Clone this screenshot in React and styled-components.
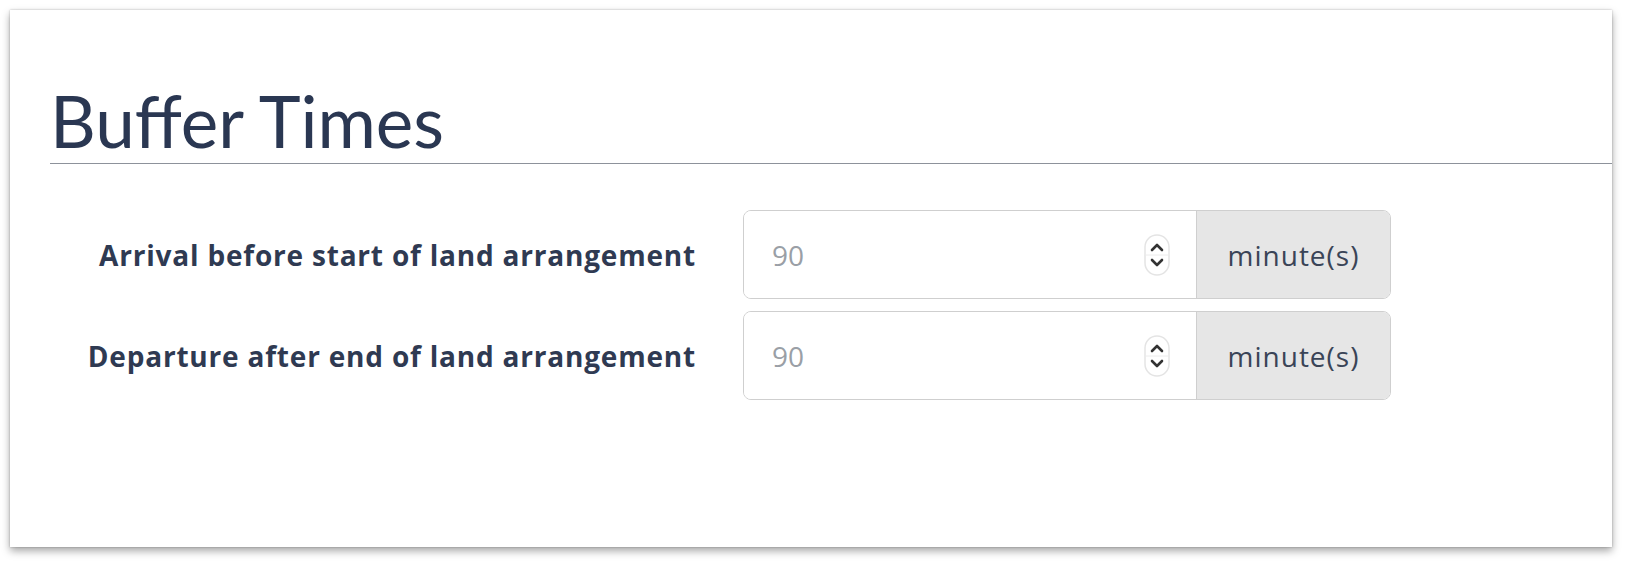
import React from 'react';
import styled, { createGlobalStyle } from 'styled-components';

const GlobalStyle = createGlobalStyle`
  html, body {
    margin: 0;
    padding: 0;
    background: #ffffff;
  }
  body {
    font-family: "Open Sans", Lato, sans-serif;
  }
`;

const Page = styled.div`
  width: 1634px;
  height: 562px;
  padding: 10px 22px 15px 10px;
  box-sizing: border-box;
`;

const Card = styled.section`
  height: 100%;
  background: #ffffff;
  box-shadow: 0 4px 8px rgba(0, 0, 0, 0.35), 0 0 2px rgba(0, 0, 0, 0.25);
  padding: 71px 0 0 40px;
  box-sizing: border-box;
`;

const Title = styled.h2`
  margin: 0;
  font-family: Lato, sans-serif;
  font-size: 71px;
  font-weight: 400;
  line-height: 80px;
  color: #2a3752;
  border-bottom: 1.5px solid #8d929b;
  padding-bottom: 2px;
`;

const Form = styled.div`
  display: grid;
  grid-template-columns: 646px 648px;
  column-gap: 47px;
  row-gap: 12px;
  margin-top: 46px;
  align-items: center;
`;

const Label = styled.label`
  text-align: right;
  font-size: 28px;
  font-weight: 700;
  letter-spacing: 0.8px;
  color: #2f3a52;
`;

const Group = styled.div`
  display: flex;
  height: 89px;
  border: 1.5px solid #cfcfcf;
  border-radius: 8px;
  box-sizing: border-box;
  overflow: hidden;
`;

const Field = styled.div`
  flex: 1;
  display: flex;
  align-items: center;
  padding: 0 26px 0 26px;
  background: #ffffff;
`;

const Input = styled.input`
  flex: 1;
  min-width: 0;
  border: none;
  outline: none;
  background: transparent;
  font-family: "Open Sans", sans-serif;
  font-size: 28px;
  color: #9a9fa6;
`;

const Addon = styled.span`
  width: 193px;
  display: flex;
  align-items: center;
  justify-content: center;
  background: #e6e6e6;
  border-left: 1.5px solid #cfcfcf;
  font-size: 28px;
  letter-spacing: 1px;
  color: #3a4457;
`;

const Spinner = () => (
  <svg width="26" height="42" viewBox="0 0 26 42">
    <rect x="1" y="1" width="24" height="40" rx="12" fill="#fff" stroke="#e4e4e4" strokeWidth="1.5" />
    <line x1="2" y1="21" x2="24" y2="21" stroke="#ececec" strokeWidth="1" />
    <path d="M8 16 L13 11 L18 16" fill="none" stroke="#333" strokeWidth="2.6" strokeLinecap="round" strokeLinejoin="round" />
    <path d="M8 26 L13 31 L18 26" fill="none" stroke="#333" strokeWidth="2.6" strokeLinecap="round" strokeLinejoin="round" />
  </svg>
);

const rows = [
  { id: 'arrival', label: 'Arrival before start of land arrangement' },
  { id: 'departure', label: 'Departure after end of land arrangement' },
];

export default function App() {
  return (
    <>
      <GlobalStyle />
      <Page>
        <Card>
          <Title>Buffer Times</Title>
          <Form>
            {rows.map((r) => (
              <React.Fragment key={r.id}>
                <Label htmlFor={r.id}>{r.label}</Label>
                <Group>
                  <Field>
                    <Input id={r.id} type="text" defaultValue="90" />
                    <Spinner />
                  </Field>
                  <Addon>minute(s)</Addon>
                </Group>
              </React.Fragment>
            ))}
          </Form>
        </Card>
      </Page>
    </>
  );
}
